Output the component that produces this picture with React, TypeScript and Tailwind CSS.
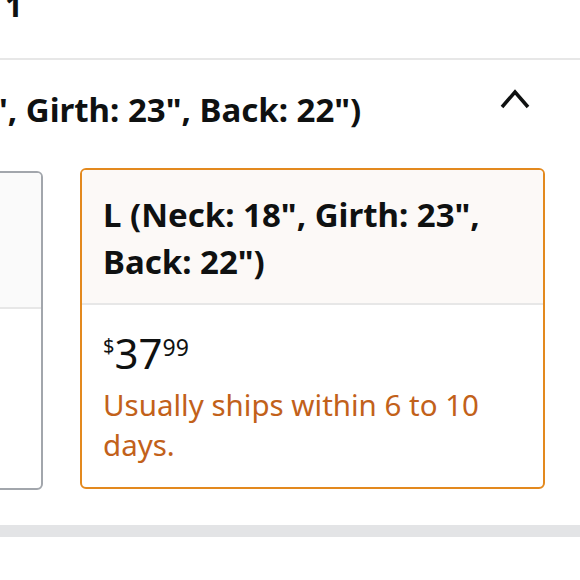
import React from 'react';

const App: React.FC = () => {
  return (
    <div className="w-[580px] h-[580px] bg-white overflow-hidden font-['Noto_Sans',sans-serif] text-[#0f1111]">
      {/* Top cut-off label */}
      <div className="h-[58px] overflow-hidden">
        <div className="ml-[5px] -mt-[10px] text-[31px] font-bold leading-none">1</div>
      </div>
      <div className="h-[2px] bg-[#e7e7e7]" />

      {/* Section header */}
      <div className="flex items-start justify-between pt-[26px] pr-[49px]">
        <div className="-ml-[8px] text-[33px] font-bold leading-[47px] whitespace-nowrap">
          ", Girth: 23", Back: 22")
        </div>
        <svg width="32" height="24" viewBox="0 0 32 24">
          <path d="M3 21 L16 6 L29 21" fill="none" stroke="#0f1111" strokeWidth="3.5" />
        </svg>
      </div>

      {/* Option cards */}
      <div className="flex items-start gap-[37px] mt-[38px]">
        <div className="-ml-[60px] w-[103px] h-[319px] shrink-0 border-2 border-[#a2a6ac] rounded-[6px] overflow-hidden">
          <div className="h-[136px] bg-[#fafafa] border-b-2 border-[#e7e7e7]" />
        </div>

        <div className="w-[465px] h-[321px] -mt-[3px] shrink-0 border-2 border-[#e3891e] rounded-[6px] overflow-hidden">
          <div className="bg-[#fcf9f7] border-b-2 border-[#e7e7e7] pl-[21px] pt-[21px] pb-[18px] text-[33px] font-bold leading-[47px]">
            L (Neck: 18", Girth: 23",
            <br />
            Back: 22")
          </div>
          <div className="pl-[21px] pt-[27px]">
            <div className="flex items-start">
              <span className="text-[20px] leading-none mt-[4px]">$</span>
              <span className="text-[42px] leading-none">37</span>
              <span className="text-[23px] leading-none mt-[4px]">99</span>
            </div>
            <div className="mt-[11px] text-[29.5px] leading-[40px] text-[#c2611a]">
              Usually ships within 6 to 10
              <br />
              days.
            </div>
          </div>
        </div>
      </div>

      <div className="mt-[35px] h-[12px] bg-[#e3e4e6]" />
    </div>
  );
};

export default App;
